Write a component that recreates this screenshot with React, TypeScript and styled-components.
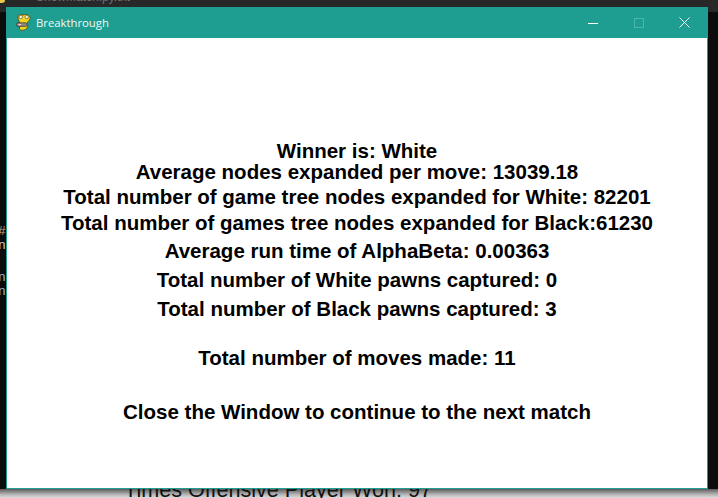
import React from 'react';
import styled, { createGlobalStyle } from 'styled-components';

const GlobalStyle = createGlobalStyle`
  html, body {
    margin: 0;
    padding: 0;
    background: #0c0c0c;
    overflow: hidden;
  }
`;

const Desktop = styled.div`
  width: 718px;
  height: 498px;
  display: flex;
  flex-direction: column;
  overflow: hidden;
  background: #0c0c0c;
`;

const TopStrip = styled.div`
  height: 7px;
  flex: none;
  display: flex;
  overflow: hidden;
  background: #282828;
  color: #6e6e6e;
  font: 12px/0 'Liberation Sans', sans-serif;
  white-space: nowrap;
`;

const TopIconChip = styled.div`
  width: 5px;
  height: 3px;
  background: #e8c84a;
  border-bottom-right-radius: 3px;
`;

const TopLabel = styled.div`
  margin: -3px 0 0 31px;
`;

const Middle = styled.div`
  height: 482px;
  flex: none;
  display: flex;
`;

const LeftGutter = styled.div`
  width: 6px;
  flex: none;
  overflow: hidden;
  background: linear-gradient(#282828 5px, #0c0c0c 5px);
  padding-top: 218px;
  box-sizing: border-box;
  font: 13px/14px 'Liberation Mono', monospace;
`;

const Fragment = styled.div<{ $color: string; $gap: number }>`
  width: 8px;
  margin-left: -2px;
  margin-top: ${p => p.$gap}px;
  color: ${p => p.$color};
`;

const RightGutter = styled.div`
  flex: 1;
  background: linear-gradient(#282828 5px, #0c0c0c 5px);
`;

const Window = styled.div`
  width: 702px;
  height: 482px;
  flex: none;
  display: flex;
  flex-direction: column;
  border: 1px solid #1d9e90;
  border-top: none;
  box-sizing: border-box;
`;

const TitleBar = styled.div`
  height: 31px;
  flex: none;
  margin: 0 -1px;
  background: #1d9e90;
  display: flex;
  align-items: center;
  padding: 0 1px 0 10px;
  color: #f2f8f7;
  font: 11.3px 'Open Sans', 'Liberation Sans', sans-serif;
`;

const Title = styled.span`
  margin-left: 5px;
  flex: 1;
`;

const CaptionButton = styled.div`
  width: 45.5px;
  height: 31px;
  display: flex;
  align-items: center;
  justify-content: center;
`;

const Content = styled.main`
  flex: 1;
  background: #ffffff;
  padding-top: 102px;
  text-align: center;
  color: #000000;
  font-family: 'Liberation Sans', Arial, sans-serif;
  font-weight: 700;
  font-size: 20.5px;
`;

const Line = styled.div<{ $gap: number }>`
  height: 21px;
  line-height: 21px;
  margin-top: ${p => p.$gap}px;
  white-space: nowrap;
`;

const BottomStrip = styled.div`
  height: 9px;
  flex: none;
  overflow: hidden;
  background: linear-gradient(#5c5c5c, #b4b4b4 60%, #dcdcdc);
  color: #111111;
  font: 21.6px/0 'Liberation Sans', sans-serif;
  padding: 1px 0 0 124px;
  box-sizing: border-box;
  white-space: nowrap;
`;

const PygameIcon = () => (
  <svg width="15" height="17" viewBox="0 0 15 17">
    <path d="M2 3 C2 0.5 5 0 7 1.2 C9 0 13 0.3 14 3 C14.6 5 13 7 11.5 8 C12 11 12 14 9.5 15.5 C7.5 16.7 4.5 16.5 3.5 15 L3.5 8 C2.5 6.5 2 5 2 3 Z" fill="#f4d41e" stroke="#4a3e10" strokeWidth="0.7" />
    <circle cx="4.7" cy="3" r="1.7" fill="#ffffff" stroke="#3a3a3a" strokeWidth="0.6" />
    <circle cx="10.7" cy="3" r="1.7" fill="#ffffff" stroke="#3a3a3a" strokeWidth="0.6" />
    <rect x="0.5" y="8.8" width="10.5" height="3.6" rx="1.4" fill="#94857e" stroke="#333333" strokeWidth="0.7" />
    <rect x="2.5" y="10" width="2.5" height="1.2" fill="#e6e0dc" />
  </svg>
);

const lines: { text: string; gap: number }[] = [
  { text: 'Winner is: White', gap: 0 },
  { text: 'Average nodes expanded per move: 13039.18', gap: 0 },
  { text: 'Total number of game tree nodes expanded for White: 82201', gap: 4 },
  { text: 'Total number of games tree nodes expanded for Black:61230', gap: 5 },
  { text: 'Average run time of AlphaBeta: 0.00363', gap: 7 },
  { text: 'Total number of White pawns captured: 0', gap: 8 },
  { text: 'Total number of Black pawns captured: 3', gap: 8 },
  { text: 'Total number of moves made: 11', gap: 28 },
  { text: 'Close the Window to continue to the next match', gap: 33 },
];

export default function App() {
  return (
    <Desktop>
      <GlobalStyle />
      <TopStrip>
        <TopIconChip />
        <TopLabel>ShowMatch.py.txt</TopLabel>
      </TopStrip>
      <Middle>
        <LeftGutter>
          <Fragment $color="#c9a27a" $gap={0}>#</Fragment>
          <Fragment $color="#c8c8c8" $gap={0}>n</Fragment>
          <Fragment $color="#8fb4d8" $gap={18}>n</Fragment>
          <Fragment $color="#8fb4d8" $gap={0}>n</Fragment>
        </LeftGutter>
        <Window>
          <TitleBar>
            <PygameIcon />
            <Title>Breakthrough</Title>
            <CaptionButton>
              <svg width="10" height="10" viewBox="0 0 10 10"><path d="M0 5.5H10" stroke="#ffffff" strokeWidth="1" /></svg>
            </CaptionButton>
            <CaptionButton>
              <svg width="10" height="10" viewBox="0 0 10 10"><rect x="0.5" y="0.5" width="9" height="9" fill="none" stroke="#4fb5aa" /></svg>
            </CaptionButton>
            <CaptionButton>
              <svg width="11" height="11" viewBox="0 0 11 11"><path d="M0.5 0.5L10.5 10.5M10.5 0.5L0.5 10.5" stroke="#ffffff" strokeWidth="1" /></svg>
            </CaptionButton>
          </TitleBar>
          <Content>
            {lines.map(l => <Line key={l.text} $gap={l.gap}>{l.text}</Line>)}
          </Content>
        </Window>
        <RightGutter />
      </Middle>
      <BottomStrip>Times Offensive Player Won: 97</BottomStrip>
    </Desktop>
  );
}
